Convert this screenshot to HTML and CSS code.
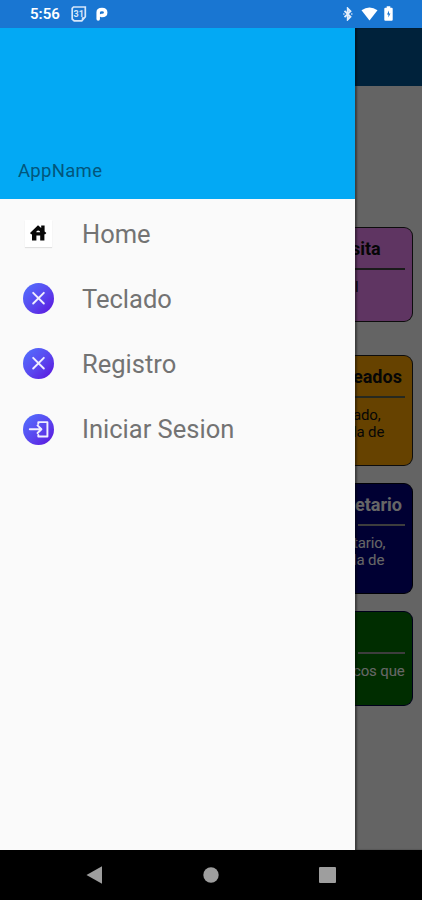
FILE: index.html
```html
<!DOCTYPE html>
<html lang="es">
<head>
    <meta charset="UTF-8">
    <meta name="viewport" content="width=device-width, initial-scale=1.0">
    <title>AppName</title>
    <link rel="stylesheet" href="styles.css">
</head>
<body>
    <div class="phone">
        <header class="status-bar">
            <span class="time">5:56</span>
            <svg class="calendar-icon" width="16" height="16" viewBox="0 0 16 16">
                <path d="M2.5 1h11.8v9.8L10.8 14.8H3.2L1.2 13V2.3z" fill="none" stroke="#d5e6fa" stroke-width="1.7"/>
                <path d="M10.8 14.8v-3.6h3.5z" fill="#d5e6fa"/>
                <text x="7.7" y="11" text-anchor="middle" class="calendar-day">31</text>
            </svg>
            <svg class="p-icon" width="12" height="14" viewBox="0 0 12 14">
                <path d="M2.2 12V5.2Q2.2 2.4 6 2.4Q9.7 2.4 9.7 5.4Q9.7 8.4 6 8.4H5.4" fill="none" stroke="#fff" stroke-width="3.5" stroke-linecap="round"/>
            </svg>
            <div class="status-right">
                <svg width="10" height="14" viewBox="0 0 10 14">
                    <path d="M1.5 3.8l6 6L4.7 12.6V1.4l2.8 2.8-6 6" fill="none" stroke="#e4effc" stroke-width="1.8"/>
                    <path d="M.3 7h1.2M8.2 7h1.2" stroke="#e4effc" stroke-width="1.4"/>
                </svg>
                <svg class="wifi-icon" width="17" height="14" viewBox="0 0 17 14">
                    <path d="M.5 3.2Q8.5-2 16.5 3.2L8.5 13.5z" fill="#fff"/>
                </svg>
                <svg width="9" height="15" viewBox="0 0 9 15">
                    <path d="M2.7.3h3.6v1.4h1.4q1 0 1 1v11q0 1-1 1H1.3q-1 0-1-1v-11q0-1 1-1h1.4z" fill="#fff"/>
                    <path d="M5 4.4L3 8.6h1.4v3l2-4.2H5z" fill="#1976d2"/>
                </svg>
            </div>
        </header>

        <div class="screen">
            <nav class="drawer">
                <div class="drawer-header">AppName</div>
                <ul class="menu">
                    <li class="menu-item">
                        <svg class="home-icon" width="27" height="27" viewBox="0 0 27 27">
                            <path d="M5 13L13 5.2l3.2 2.9V5.6h3.4v5.8l1.8 1.7-1.5 1.4-.5-.4v6.4h-4.2v-4.9h-3.8v4.9H7v-6.4l-.7.5z" fill="#080808"/>
                            <path d="M11.2 12.2q.2-1.6 2-1.6t2 1.6z" fill="#fff"/>
                        </svg>
                        <span>Home</span>
                    </li>
                    <li class="menu-item">
                        <span class="round-icon">
                            <svg width="31" height="31" viewBox="0 0 32 32">
                                <path d="M10.5 10.2l11 11M21.5 10.2l-11 11" class="stroke"/>
                            </svg>
                        </span>
                        <span>Teclado</span>
                    </li>
                    <li class="menu-item">
                        <span class="round-icon">
                            <svg width="31" height="31" viewBox="0 0 32 32">
                                <path d="M10.5 10.2l11 11M21.5 10.2l-11 11" class="stroke"/>
                            </svg>
                        </span>
                        <span>Registro</span>
                    </li>
                    <li class="menu-item">
                        <span class="round-icon">
                            <svg width="31" height="31" viewBox="0 0 32 32">
                                <path d="M7 15.7h11.5M15 11.8l4 3.9-4 3.9M15.8 10V8.4h9.4v14.8h-9.4v-1.6" class="stroke"/>
                            </svg>
                        </span>
                        <span>Iniciar Sesion</span>
                    </li>
                </ul>
            </nav>

            <main class="content">
                <div class="app-bar"></div>
                <section class="card card-violet">
                    <h2>sita</h2>
                    <hr>
                    <p>l</p>
                </section>
                <section class="card card-orange">
                    <h2>eados</h2>
                    <hr>
                    <p>ado,<br>la de</p>
                </section>
                <section class="card card-navy">
                    <h2>etario</h2>
                    <hr>
                    <p>tario,<br>la de</p>
                </section>
                <section class="card card-green">
                    <h2></h2>
                    <hr>
                    <p>cos que</p>
                </section>
                <div class="scrim"></div>
            </main>
        </div>

        <footer class="nav-bar">
            <svg width="17" height="18" viewBox="0 0 17 18"><path d="M.5 9L16 .3v17.4z" fill="#9e9e9e"/></svg>
            <svg width="16" height="16" viewBox="0 0 16 16"><circle cx="8" cy="8" r="7.7" fill="#9e9e9e"/></svg>
            <svg width="17" height="16" viewBox="0 0 17 16"><rect width="17" height="16" rx="1" fill="#9e9e9e"/></svg>
        </footer>
    </div>
</body>
</html>
```

FILE: styles.css
```css
* {
    box-sizing: border-box;
}
body {
    margin: 0;
    font-family: Roboto, sans-serif;
    background: #000;
}
svg {
    display: block;
    flex: none;
}
.phone {
    width: 422px;
    height: 900px;
    display: flex;
    flex-direction: column;
    overflow: hidden;
}

/* status bar */
.status-bar {
    height: 28px;
    flex: none;
    display: flex;
    align-items: center;
    padding: 0 29px 1px 30px;
    background: #1976d2;
    color: #fff;
}
.time {
    width: 41px;
    font-size: 15px;
    font-weight: 600;
    line-height: 28px;
    padding-top: 1px;
}
.calendar-day {
    font-size: 9px;
    font-weight: 700;
    fill: #d5e6fa;
}
.p-icon {
    margin-left: 9px;
}
.status-right {
    display: flex;
    align-items: center;
    margin-left: auto;
}
.wifi-icon {
    margin: 0 6px 0 8px;
}

.screen {
    height: 822px;
    flex: none;
    display: flex;
}

/* navigation drawer */
.drawer {
    width: 355px;
    flex: none;
    background: #fafafa;
}
.drawer-header {
    height: 171px;
    padding: 131px 0 0 18px;
    background: #03a9f4;
    color: #02567c;
    font-size: 18.5px;
    line-height: 24px;
    letter-spacing: 0.3px;
}
.menu {
    list-style: none;
    margin: 0;
    padding: 2px 0 0;
}
.menu-item {
    height: 65.2px;
    display: flex;
    align-items: center;
    gap: 28px;
    padding-left: 23px;
    color: #737373;
    font-size: 25.5px;
}
.home-icon {
    margin: 0 2px;
    background: #fff;
    box-shadow: 0 1px 1px #e0e0e0;
}
.round-icon {
    width: 31px;
    height: 31px;
    border-radius: 50%;
    background: linear-gradient(135deg, #5273ff, #5a45ee 55%, #5a10dc);
}
.stroke {
    fill: none;
    stroke: #f0eeff;
    stroke-width: 2;
    stroke-linecap: round;
    stroke-linejoin: round;
}

/* page behind the drawer */
.content {
    position: relative;
    flex: 1;
    min-width: 0;
    overflow: hidden;
    background: #fafafa;
}
.scrim {
    position: absolute;
    inset: 0;
    background: rgba(0, 0, 0, 0.6);
    box-shadow: inset 2px 0 2px rgba(0, 0, 0, 0.4);
}
.app-bar {
    height: 58px;
    margin-bottom: 141px;
    background: #005694;
}
.card {
    height: 111px;
    margin: 0 9px 17px 0;
    padding: 10px 7px 0 0;
    border: 1.5px solid #222;
    border-left: 0;
    border-radius: 0 9px 9px 0;
    white-space: nowrap;
    color: #111;
}
.card h2 {
    height: 22px;
    margin: 0 0 8px -2px;
    font-size: 18px;
    line-height: 22px;
    font-weight: 700;
}
.card hr {
    height: 2px;
    margin: 0;
    border: 0;
    background: #444;
}
.card p {
    margin: 9px 0 0 -2px;
    font-size: 15px;
    line-height: 17px;
    letter-spacing: -0.15px;
}
.card-violet {
    height: 95px;
    margin-bottom: 33px;
    background: #ee86f4;
}
.card-violet h2 {
    margin-left: -4px;
}
.card-violet p {
    margin-left: 0;
}
.card-orange {
    background: #ffa500;
}
.card-orange hr {
    background: #5f6650;
}
.card-navy {
    background: #000080;
    border-color: #001;
    color: #fff;
}
.card-navy h2 {
    margin-left: 0;
}
.card-navy hr,
.card-green hr {
    margin-left: 3px;
    background: #999;
}
.card-green {
    height: 95px;
    background: #007000;
    border-color: #000040;
    color: #fff;
}

/* system buttons */
.nav-bar {
    flex: 1;
    display: flex;
    align-items: center;
    justify-content: space-between;
    padding: 0 86px;
    background: #000;
}
```
